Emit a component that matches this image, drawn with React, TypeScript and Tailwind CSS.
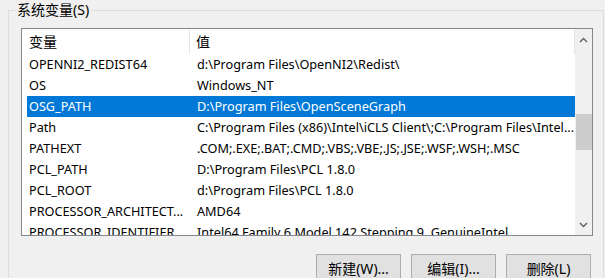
const rows = [
  { name: "OPENNI2_REDIST64", value: "d:\\Program Files\\OpenNI2\\Redist\\" },
  { name: "OS", value: "Windows_NT" },
  { name: "OSG_PATH", value: "D:\\Program Files\\OpenSceneGraph", selected: true },
  { name: "Path", value: "C:\\Program Files (x86)\\Intel\\iCLS Client\\;C:\\Program Files\\Intel..." },
  { name: "PATHEXT", value: ".COM;.EXE;.BAT;.CMD;.VBS;.VBE;.JS;.JSE;.WSF;.WSH;.MSC" },
  { name: "PCL_PATH", value: "D:\\Program Files\\PCL 1.8.0" },
  { name: "PCL_ROOT", value: "d:\\Program Files\\PCL 1.8.0" },
  { name: "PROCESSOR_ARCHITECT...", value: "AMD64" },
  { name: "PROCESSOR_IDENTIFIER", value: "Intel64 Family 6 Model 142 Stepping 9, GenuineIntel" },
];

function Chevron({ up }: { up?: boolean }) {
  return (
    <svg width="9" height="6" viewBox="0 0 9 6" className="block">
      <path
        d={up ? "M1 5 L4.5 1.5 L8 5" : "M1 1 L4.5 4.5 L8 1"}
        fill="none"
        stroke="#606060"
        strokeWidth="1.4"
      />
    </svg>
  );
}

export default function App() {
  return (
    <div
      className="w-[605px] h-[278px] overflow-hidden bg-[#f0f0f0] text-[12.7px] text-black"
      style={{ fontFamily: '"Noto Sans", "Noto Sans CJK SC", sans-serif' }}
    >
      <fieldset className="ml-[8px] w-[596px] h-[300px] border border-[#dcdcdc]">
        <legend className="ml-[6px] px-[2px] leading-[20px] text-[14px]">系统变量(S)</legend>
        <div className="ml-[12px] mt-[8px] w-[572px] h-[208px] border border-[#828790] bg-white flex overflow-hidden">
          <div className="flex-1 flex flex-col">
            <div className="h-[25px] shrink-0 flex items-center pl-[5px] text-[14px]">
              <div className="w-[163px] pl-[2px] h-full flex items-center border-r border-[#e5e5e5]">变量</div>
              <div className="flex-1 pl-[6px] h-full flex items-center border-r border-[#e5e5e5]">值</div>
            </div>
            {rows.map((r) => (
              <div
                key={r.name}
                className={`h-[21px] shrink-0 ml-[5px] flex items-center whitespace-nowrap ${
                  r.selected ? "bg-[#0078d7] text-white" : ""
                }`}
              >
                <div className="w-[163px] pl-[2px] overflow-hidden">{r.name}</div>
                <div className="flex-1 pl-[7px] overflow-hidden">{r.value}</div>
              </div>
            ))}
          </div>
          <div className="w-[17px] shrink-0 bg-[#f0f0f0] flex flex-col items-center">
            <div className="h-[21px] w-full flex items-center justify-center">
              <Chevron up />
            </div>
            <div className="h-[64px]" />
            <div className="w-[16px] h-[36px] bg-[#cdcdcd]" />
            <div className="flex-1" />
            <div className="h-[21px] w-full flex items-center justify-center">
              <Chevron />
            </div>
          </div>
        </div>
        <div className="mt-[18px] flex justify-end gap-[10px] pr-[12px] text-[14px]">
          {["新建(W)...", "编辑(I)...", "删除(L)"].map((b) => (
            <button
              key={b}
              className="w-[85px] h-[28px] bg-[#e1e1e1] border border-[#adadad] flex items-center justify-center"
            >
              {b}
            </button>
          ))}
        </div>
      </fieldset>
    </div>
  );
}
